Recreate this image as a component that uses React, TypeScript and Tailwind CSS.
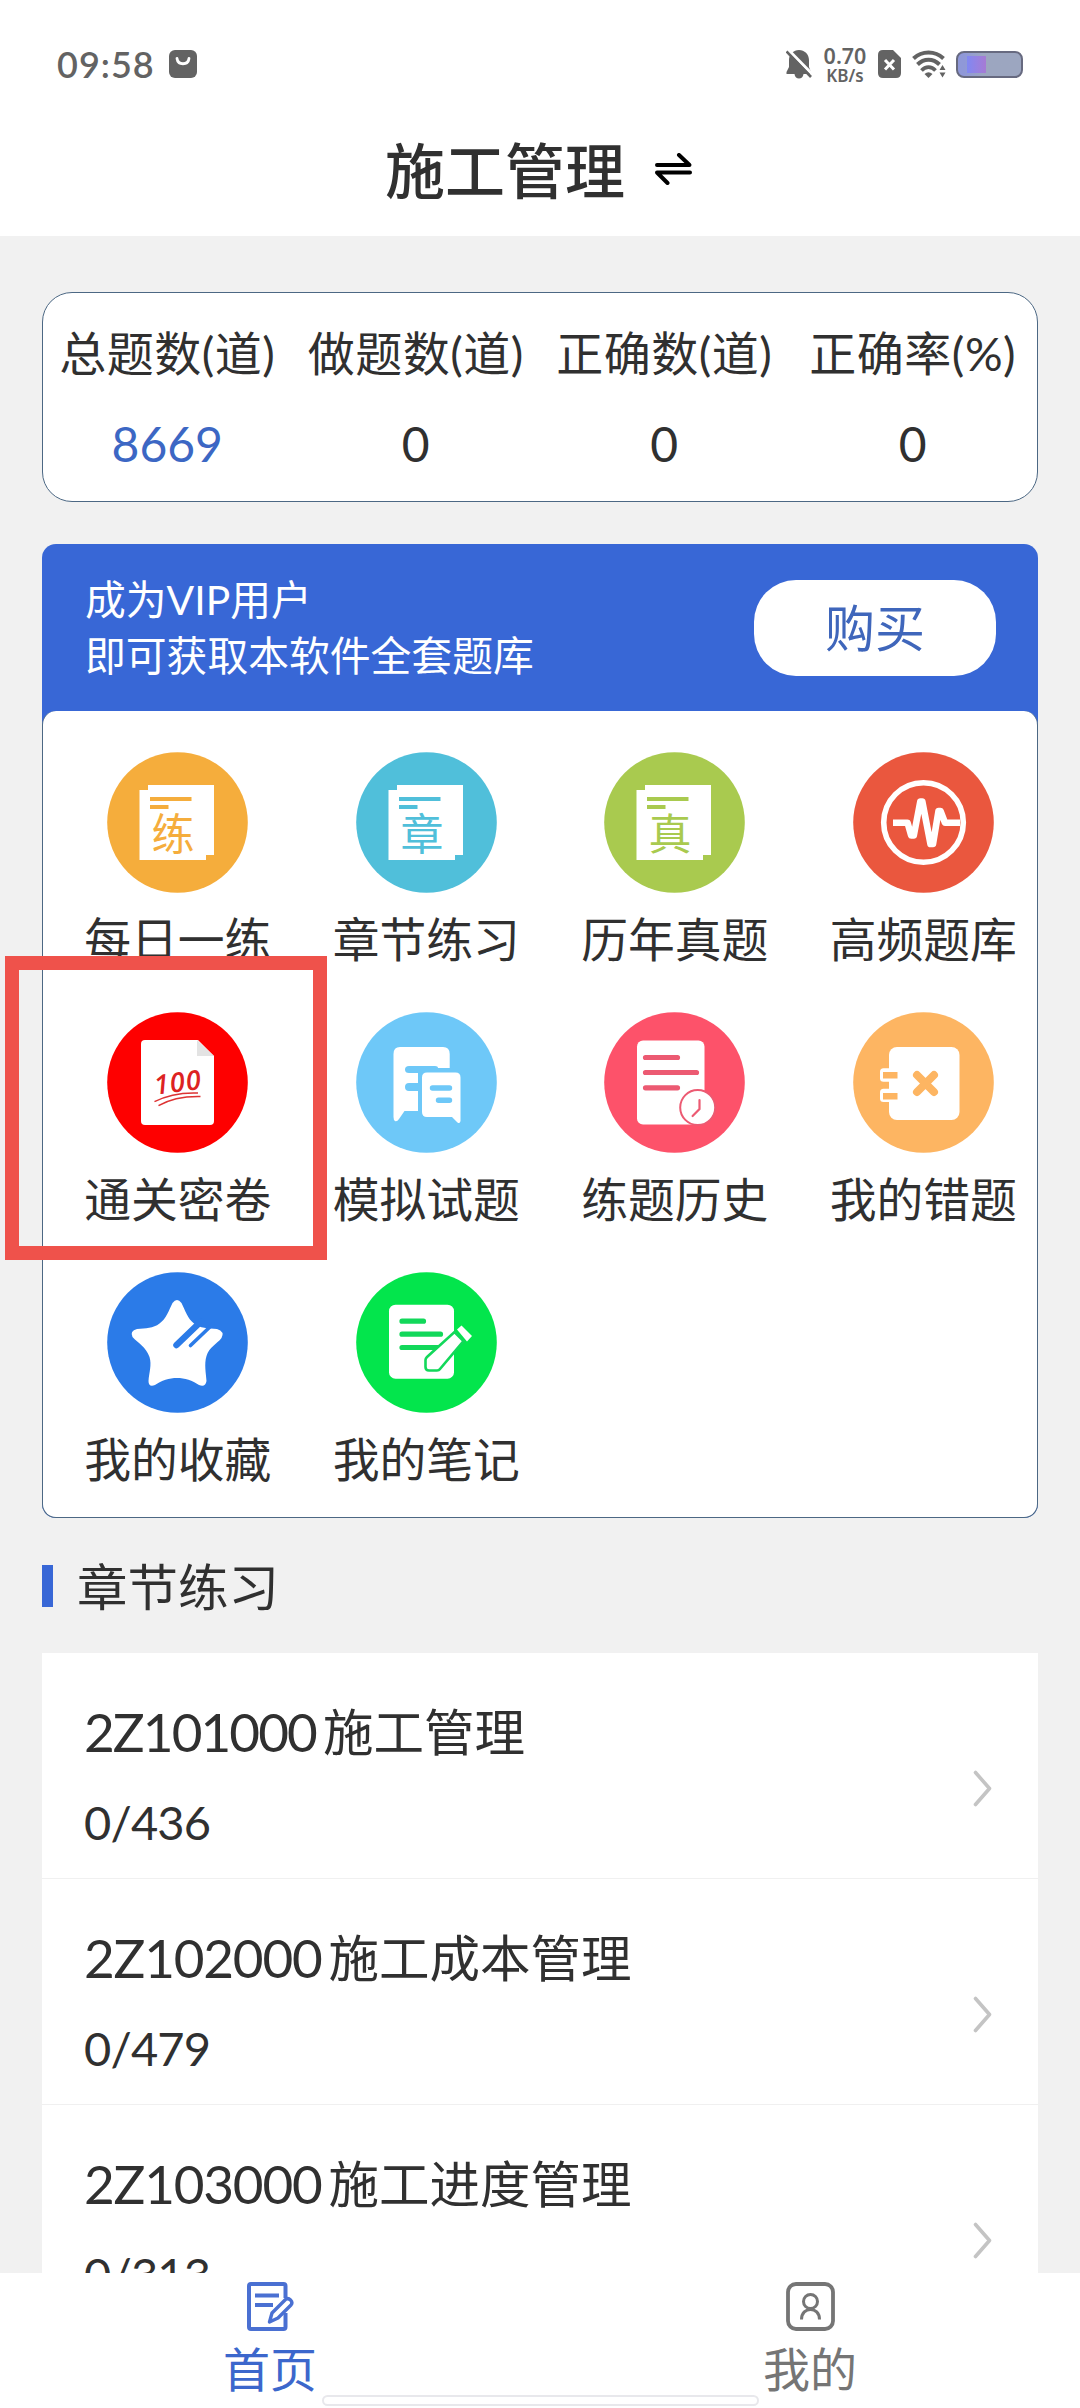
import type { ReactNode } from "react";

const INK = "text-[#303030]";

type Stat = { label: string; value: string; accent?: boolean };

const STATS: Stat[] = [
  { label: "总题数(道)", value: "8669", accent: true },
  { label: "做题数(道)", value: "0" },
  { label: "正确数(道)", value: "0" },
  { label: "正确率(%)", value: "0" },
];

// Codes with more narrow digits sit a little tighter.
const CHAPTERS = [
  { code: "2Z101000", title: "施工管理", progress: "0/436", tracking: "tracking-[-1.9px]" },
  { code: "2Z102000", title: "施工成本管理", progress: "0/479", tracking: "tracking-[-1.2px]" },
  { code: "2Z103000", title: "施工进度管理", progress: "0/313", tracking: "tracking-[-1.2px]" },
];

function Disc({ color, children }: { color: string; children: ReactNode }) {
  return (
    <svg width="141" height="141" viewBox="0 0 141 141" fill="none">
      <circle cx="70.5" cy="70.5" r="70.3" fill={color} />
      {children}
    </svg>
  );
}

// Two stacked sheets with a single character on the front one.
function SheetIcon({ color, char }: { color: string; char: string }) {
  return (
    <Disc color={color}>
      <path d="M41 33H107V103H99V108H32.5V38H41Z" fill="#fff" />
      <path d="M43 47H84.5M43 55H61.5" stroke={color} strokeWidth="3.8" />
      <text
        x="66"
        y="98"
        fontSize="43"
        textAnchor="middle"
        fill={color}
        className="font-['Noto_Sans_CJK_SC',sans-serif]"
      >
        {char}
      </text>
    </Disc>
  );
}

function PulseIcon() {
  return (
    <Disc color="#ea573e">
      <circle cx="70.5" cy="70.5" r="39.8" stroke="#fff" strokeWidth="5.6" />
      <path
        d="M40 70.7H54.5L58.2 83.5H60.8L67.3 49.5H69.3L77.5 92H80L85.5 59H87.5L92 70.7H107"
        stroke="#fff"
        strokeWidth="6.6"
        strokeLinejoin="round"
      />
    </Disc>
  );
}

function PaperIcon() {
  return (
    <Disc color="#fe0000">
      <path d="M38 28H91L107 44V109Q107 113 103 113H38Q34 113 34 109V32Q34 28 38 28Z" fill="#fff" />
      <path d="M90 28L107 44H90Z" fill="#e3e3e3" />
      <text
        x="47"
        y="80"
        fontSize="27"
        fontWeight="600"
        fontStyle="italic"
        textLength="47"
        transform="rotate(-7 70 72)"
        fill="#dd2222"
        className="font-['Open_Sans',sans-serif]"
      >
        100
      </text>
      <path d="M47.5 89.7Q66 80 91 81M51.5 93.7Q68 84 93.5 84.5" stroke="#dd3333" strokeWidth="1.5" />
    </Disc>
  );
}

function MockIcon() {
  return (
    <Disc color="#6ec8f8">
      <path
        d="M44 35H87Q93.7 35 93.7 42V56H82Q82 54 79 54H53Q49 54 49 57.5Q49 61 53 61H62V71H53Q49 71 49 75Q49 79 53 79H62V99H48.5L43 107Q41 110 39 109Q37.5 108 37.5 105V42Q37.5 35 44 35Z"
        fill="#fff"
      />
      <path
        d="M71 60.5H99.5Q104.5 60.5 104.5 65.5V109Q104 112 101.5 110.5L96 105H71Q66 105 66 100V65.5Q66 60.5 71 60.5Z"
        fill="#fff"
      />
      <path d="M76.5 76H93.5M82.5 88.2H93.5" stroke="#6ec8f8" strokeWidth="5.4" strokeLinecap="round" />
    </Disc>
  );
}

function HistoryIcon() {
  return (
    <Disc color="#fd526a">
      <rect x="33" y="28.5" width="67.5" height="84" rx="6" fill="#fff" />
      <path d="M41.5 45.5H73.5M41.5 60.5H92.5M41.5 75.8H73.5" stroke="#ec5a72" strokeWidth="5.2" strokeLinecap="round" />
      <circle cx="93.7" cy="95.5" r="17.5" fill="#fff" stroke="#ec5a72" strokeWidth="2" />
      <path d="M95.5 88V97L88.6 104" stroke="#ec5a72" strokeWidth="2.2" strokeLinecap="round" />
    </Disc>
  );
}

function MistakesIcon() {
  return (
    <Disc color="#fdb562">
      <rect x="36" y="35" width="70.5" height="73" rx="8" fill="#fff" />
      <rect x="27" y="56.3" width="18" height="13.4" rx="3.5" fill="#fff" />
      <rect x="27" y="76.7" width="18" height="13.4" rx="3.5" fill="#fff" />
      <path d="M30 63.2H44.5M30 84.2H44.5" stroke="#fdb562" strokeWidth="6.4" />
      <path d="M64 63L81 80M81 63L64 80" stroke="#fdb562" strokeWidth="8" strokeLinecap="round" />
    </Disc>
  );
}

function FavoriteIcon() {
  return (
    <Disc color="#2b7be8">
      <path
        d="M65.5 31Q70 25 74.5 31C78 38 81 47 87 51.5C93 56.5 101 56 110 57Q118 59.5 114.5 66C110 72 102 75 99.5 84C97 92 99 101 99.500 109Q98.5 115.5 92 113C79 103.5 61 103.5 48 113Q41.5 115.5 41.5 109C42 101 45 93 42.5 85C39 75 31 71 25.5 65Q22.5 59 30 57C39 56 46 56.5 52.5 51.5C59 47 62 38 65.5 31Z"
        fill="#fff"
      />
      <path d="M69.5 73L94 49.5" stroke="#2b7be8" strokeWidth="6.5" strokeLinecap="round" />
      <path d="M83.5 73.5L106 52" stroke="#2b7be8" strokeWidth="3.6" strokeLinecap="round" />
    </Disc>
  );
}

function NotesIcon() {
  return (
    <Disc color="#03e54c">
      <rect x="33" y="32.7" width="65" height="74" rx="6.5" fill="#fff" />
      <path d="M46 49.2H67.5M46 62.2H84.5M46 75.5H84" stroke="#12d85a" strokeWidth="5.2" strokeLinecap="round" />
      <path
        d="M98.5 60L107.5 69L84 97Q83 98.5 81 98.5H73Q69.5 98.5 69.5 95V88Q69.5 86.5 71 85Z"
        fill="#fff"
        stroke="#12d85a"
        strokeWidth="2.6"
      />
      <path d="M101 57.5L105.5 53.5L116 64L111 69.5Z" fill="#fff" />
    </Disc>
  );
}

const TILES: { label: string; icon: ReactNode }[] = [
  { label: "每日一练", icon: <SheetIcon color="#f5ad3c" char="练" /> },
  { label: "章节练习", icon: <SheetIcon color="#50bfda" char="章" /> },
  { label: "历年真题", icon: <SheetIcon color="#a9ca4f" char="真" /> },
  { label: "高频题库", icon: <PulseIcon /> },
  { label: "通关密卷", icon: <PaperIcon /> },
  { label: "模拟试题", icon: <MockIcon /> },
  { label: "练题历史", icon: <HistoryIcon /> },
  { label: "我的错题", icon: <MistakesIcon /> },
  { label: "我的收藏", icon: <FavoriteIcon /> },
  { label: "我的笔记", icon: <NotesIcon /> },
];

function StatusBar() {
  return (
    <div className="flex h-32 items-center px-[57px] text-[#636363]">
      <span className="text-[36px] leading-none font-semibold tracking-[1px]">09:58</span>
      <svg className="ml-[14px]" width="28" height="28" viewBox="0 0 28 28" fill="none">
        <rect width="28" height="28" rx="6" fill="#636363" />
        <path d="M8 8.5C9 15.5 19 15.5 20 8.5" stroke="#fff" strokeWidth="2.8" strokeLinecap="round" />
      </svg>
      <div className="ml-auto flex items-center">
        <svg width="26" height="29" viewBox="0 0 26 29" fill="none">
          <path
            d="M13 0C7.5 0 3 4.3 3 10V17L0.5 22V24H8.5C9 30 17 30 17.5 24H25V22L23 17V10C23 4.3 18.5 0 13 0Z"
            fill="#636363"
          />
          <path d="M2.5 0L27 25" stroke="#fff" strokeWidth="3" />
          <path d="M0.5 1.5L25 27" stroke="#636363" strokeWidth="2.6" />
        </svg>
        <div className="ml-[10px] flex w-[46px] flex-col items-center font-['Noto_Sans',sans-serif] font-semibold">
          <span className="text-[21.5px] leading-[23px]">0.70</span>
          <span className="text-[17px] leading-[18px]">KB/s</span>
        </div>
        <svg className="ml-[10px]" width="23" height="28" viewBox="0 0 23 28" fill="none">
          <path d="M5 0H15L23 8V23Q23 28 18 28H5Q0 28 0 23V5Q0 0 5 0Z" fill="#636363" />
          <path d="M7 10L16 19.5M16 10L7 19.5" stroke="#fff" strokeWidth="3" />
        </svg>
        <svg className="ml-[11px]" width="34" height="28" viewBox="0 0 34 28" fill="none">
          <path d="M1.5 8.5C10 0.5 23 0.5 31.5 8.5" stroke="#636363" strokeWidth="4" />
          <path d="M5.5 14.5C12 8 21 8 27.5 14.5" stroke="#636363" strokeWidth="4" />
          <path d="M9.5 20.5C13.5 16 19.5 16 23.5 20.5" stroke="#636363" strokeWidth="3.6" />
          <path d="M12.5 24Q16.500 20.5 20.5 24L16.5 28ZM30.5 15L33.5 20H27.5ZM27.5 22.5H33.5L30.5 27.5Z" fill="#636363" />
        </svg>
        <div className="ml-[10px] flex h-[27px] w-[67px] rounded-lg border-2 border-[#676a80] bg-linear-to-r from-[#8f98d8] from-10% to-[#9ca6c0] to-40% py-[3px] pl-[9px]">
          <div className="h-full w-[19px] bg-linear-to-r from-[#8088f2] to-[#a67bd4]" />
        </div>
      </div>
    </div>
  );
}

function Header() {
  return (
    <header className="h-[236px] bg-white">
      <StatusBar />
      <div className={`flex h-[86px] items-center pl-[385px] ${INK}`}>
        <h1 className="text-[60px] leading-none font-medium">施工管理</h1>
        <svg className="mt-[-4px] ml-[30px]" width="37" height="32" viewBox="0 0 37 32" fill="none">
          <path
            d="M2 12H34.5L24 2M35 19.5H2L12.5 30"
            stroke="#000"
            strokeWidth="4"
            strokeLinecap="round"
            strokeLinejoin="round"
          />
        </svg>
      </div>
    </header>
  );
}

function StatsCard() {
  return (
    <section className="grid h-[210px] grid-cols-4 rounded-[30px] border border-[#4c6884] bg-white pt-[30px] text-center">
      {STATS.map((stat) => (
        <div key={stat.label} className="flex flex-col items-center whitespace-nowrap">
          <span className="text-[47px] leading-[60px] tracking-[0.5px]">{stat.label}</span>
          <span
            className={
              stat.accent
                ? "mt-[31px] text-[48px] leading-[60px] text-[#3c67c4]"
                : "mt-[31px] text-[48px] leading-[60px]"
            }
          >
            {stat.value}
          </span>
        </div>
      ))}
    </section>
  );
}

function VipPanel() {
  return (
    <section className="mt-[42px] rounded-[14px] bg-[#3867d6]">
      <div className="flex h-[167px] items-center justify-between pr-[42px] pl-[43px]">
        <p className="text-[40.8px] leading-[56px] text-white">
          成为VIP用户
          <br />
          即可获取本软件全套题库
        </p>
        <button
          type="button"
          className="h-[96px] w-[242px] rounded-[42px] bg-white text-[50px] leading-none text-[#3f66bb]"
        >
          购买
        </button>
      </div>
      <div className="grid h-[807px] grid-cols-4 content-start rounded-[14px] border border-t-0 border-[#4c6884] bg-white pt-[41px]">
        {TILES.map((tile) => (
          <div key={tile.label} className="flex h-[260px] flex-col items-center pl-[21px]">
            {tile.icon}
            <span className="mt-[16px] text-[46.8px] leading-[60px] whitespace-nowrap">{tile.label}</span>
          </div>
        ))}
      </div>
    </section>
  );
}

function ChapterList() {
  return (
    <section>
      <div className="mt-[39px] flex h-[60px] items-center">
        <div className="mb-[3px] h-[42px] w-[11px] bg-[#3867d6]" />
        <h2 className="ml-[24px] text-[50.5px] leading-none">章节练习</h2>
      </div>
      <ul className="mt-[36px]">
        {CHAPTERS.map((chapter) => (
          <li
            key={chapter.code}
            className="flex h-[226px] items-center justify-between border-b border-[#f0f0f0] bg-white pr-[46px] pl-[42px]"
          >
            <div className="pt-[22px]">
              <p className="flex text-[50.5px] leading-[64px]">
                <span className={`mr-[7px] text-[53px] ${chapter.tracking}`}>{chapter.code}</span>
                {chapter.title}
              </p>
              <p className="mt-[26px] text-[47px] leading-[64px] tracking-[-0.8px]">{chapter.progress}</p>
            </div>
            <svg className="mt-[45px]" width="19" height="37" viewBox="0 0 19 37" fill="none">
              <path
                d="M2.5 2.5L16.5 18.5L2.5 34.5"
                stroke="#c4c4c4"
                strokeWidth="3.6"
                strokeLinecap="round"
                strokeLinejoin="round"
              />
            </svg>
          </li>
        ))}
      </ul>
    </section>
  );
}

function TabBar() {
  return (
    <nav className="relative flex h-[135px] shrink-0 bg-white pt-[9px] text-[47px]">
      <div className="flex flex-1 flex-col items-center text-[#3c67cc]">
        <svg width="47" height="49" viewBox="0 0 47 49" fill="none" stroke="#4a70d2" strokeWidth="4">
          <path d="M38.5 16V4Q38.5 2 36.5 2H4Q2 2 2 4V45Q2 47 4 47H36.5Q38.5 47 38.5 45V31" />
          <path d="M8 13.5H32M8 23H26" />
          <path d="M22.5 40L25 31L38.5 17.5Q41 15.5 43.5 18Q46 20.5 44 23L31 36Z" strokeWidth="3.4" strokeLinejoin="round" />
        </svg>
        <span className="mt-[10px] leading-[56px]">首页</span>
      </div>
      <div className="flex flex-1 flex-col items-center text-[#757575]">
        <svg width="49" height="49" viewBox="0 0 49 49" fill="none" stroke="#757575" strokeWidth="3.8">
          <rect x="2" y="2" width="45" height="45" rx="8" />
          <circle cx="24.5" cy="19.5" r="7" strokeWidth="3" />
          <path d="M15.5 37.5C15.5 24 33.5 24 33.5 37.5" strokeWidth="3" />
        </svg>
        <span className="mt-[10px] leading-[56px]">我的</span>
      </div>
      <div className="absolute bottom-[2px] left-[322px] h-[11px] w-[437px] rounded-full border-2 border-[#e8e8ec] bg-white" />
    </nav>
  );
}

export default function App() {
  return (
    <div
      className={`relative flex h-[2408px] w-[1080px] flex-col overflow-hidden bg-[#f1f1f1] font-[Lato,'Noto_Sans_CJK_SC',sans-serif] ${INK}`}
    >
      <Header />
      <main className="min-h-0 flex-1 overflow-hidden px-[42px] pt-[56px]">
        <StatsCard />
        <VipPanel />
        <ChapterList />
      </main>
      <TabBar />
      {/* Highlight frame around 通关密卷 */}
      <div className="pointer-events-none absolute top-[956px] left-[5px] h-[304px] w-[322px] border-[14px] border-[#ef524b]" />
    </div>
  );
}
